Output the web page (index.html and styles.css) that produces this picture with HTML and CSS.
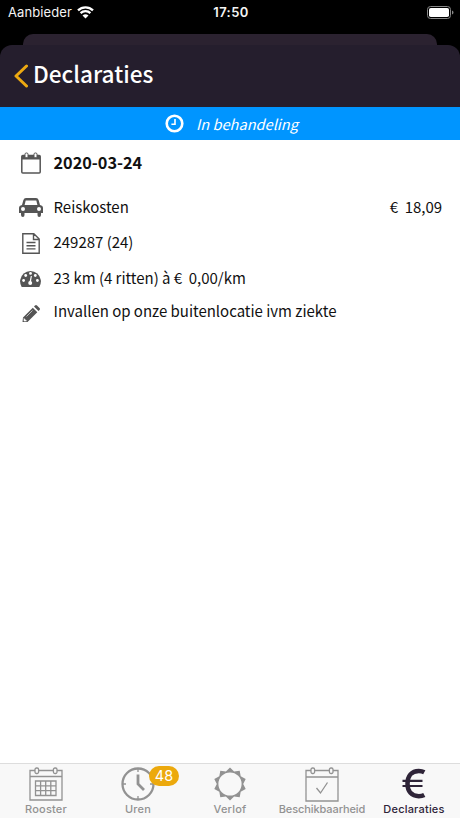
FILE: index.html
```html
<!DOCTYPE html>
<html lang="nl">
<head>
<meta charset="utf-8">
<title>Declaraties</title>
<link rel="stylesheet" href="styles.css">
</head>
<body>
<div class="screen">
  <div class="status-bar">
    <div class="carrier"><span>Aanbieder</span>
      <svg width="17" height="13" viewBox="0 0 17 13" fill="none" stroke="#fff"><path d="M1 4.4a10.8 10.8 0 0 1 15 0M3.6 7.1a7 7 0 0 1 9.8 0" stroke-width="2.300"/><path d="M5.500 9.600a4.400 4.400 0 0 1 6 0l-3 3z" fill="#fff" stroke="none"/></svg>
    </div>
    <div class="time">17:50</div>
    <svg class="battery" width="27" height="13" viewBox="0 0 27 13"><rect x=".5" y=".5" width="23" height="12" rx="3" fill="none" stroke="#888"/><rect x="2" y="2" width="20" height="9" rx="1.800" fill="#fff"/><path d="M25 4.500c2 .8 2 3.200 0 4z" fill="#888"/></svg>
  </div>
  <div class="back-card"></div>
  <header class="header">
    <svg class="back" width="14" height="24" viewBox="0 0 14 24" fill="none" stroke="#eda911" stroke-width="3" stroke-linecap="round" stroke-linejoin="round"><path d="M12.500 2 2 12l10.500 10"/></svg>
    <h1>Declaraties</h1>
  </header>
  <div class="state">
    <svg width="19" height="19" viewBox="0 0 19 19" fill="none" stroke="#fff"><circle cx="9.500" cy="9.500" r="7.800" stroke-width="2.600"/><path d="M10 5v5.200H6.400" stroke-width="1.600"/></svg>
    <em>In behandeling</em>
  </div>
  <main class="details">
    <div class="row row-date">
      <svg class="icon" width="20" height="22" viewBox="0 0 20 22" fill="none" stroke="#555"><rect x=".8" y="3.500" width="18.400" height="17.500" rx="1" stroke-width="1.500"/><path d="M1 3.500h18v4H1z" fill="#555" stroke="none"/><rect x="4" y="1" width="3" height="4.600" rx="1.200" fill="#fff"/><rect x="13" y="1" width="3" height="4.600" rx="1.200" fill="#fff"/></svg>
      <strong>2020-03-24</strong>
    </div>
    <div class="row row-cost">
      <svg class="icon" width="24" height="19" viewBox="0 0 24 19" fill="#555"><path fill-rule="evenodd" d="M7 0h10q2 0 2.600 2l1.400 5q3 .5 3 3v5h-2v2q0 2-1.800 2t-1.700-2v-2h-13v2q0 2-1.700 2T2 17v-2H0v-5q0-2.500 3-3l1.400-5Q5 0 7 0zM6.700 2.500 5.600 7h12.800l-1.100-4.500zM4 9a2 2 0 1 0 0 4 2 2 0 0 0 0-4zm16 0a2 2 0 1 0 0 4 2 2 0 0 0 0-4z"/></svg>
      <span>Reiskosten</span><span class="amount">€&nbsp; 18,09</span>
    </div>
    <div class="row row-doc">
      <svg class="icon" width="18" height="21" viewBox="0 0 18 21" fill="none" stroke="#555" stroke-width="1.400"><path d="M.8.8h11L17.200 6v14.200H.8zM11.500 1v5.500H17M4.500 9.500h9M4.500 12.700h9M4.500 15.900h9"/></svg>
      <span>249287 (24)</span>
    </div>
    <div class="row row-km">
      <svg class="icon" width="21" height="17" viewBox="0 0 21 17"><path d="M1.700 17a10.400 10.400 0 1 1 17.600 0z" fill="#555"/><g fill="#fff"><circle cx="3.600" cy="10.500" r="1.400"/><circle cx="5.700" cy="5.500" r="1.400"/><circle cx="10.500" cy="3.400" r="1.400"/><circle cx="15.300" cy="5.500" r="1.400"/><circle cx="17.400" cy="10.500" r="1.400"/><circle cx="10.200" cy="13" r="2"/><path d="m11.900 6-1 6H9.500l1.300-6z"/></g></svg>
      <span>23 km (4 ritten) à €&nbsp; 0,00/km</span>
    </div>
    <div class="row row-note">
      <svg class="icon" width="18" height="18" viewBox="0 0 18 18"><path d="m1 12.500 9.800-9.800 4.500 4.500L5.500 17H.5zM12 1.500l1-1q1-1 2 0L17.500 3q1 1 0 2l-1 1z" fill="#555"/><path d="m2 13.500 2.500 2.500H2zM4.500 11.500l6-6" fill="#fff" stroke="#fff" stroke-width=".6"/></svg>
      <span>Invallen op onze buitenlocatie ivm ziekte</span>
    </div>
  </main>
  <nav class="tabs">
    <div class="tab">
      <svg width="34" height="34" viewBox="0 0 34 34" fill="none" stroke="#929292" stroke-width="1.300"><path d="M6 3.500H1V33h32V3.500h-5M10 3.500h14M1 9.500h32M6.500 14h20.500v14.500H6.500zM11.600 14v14.500M16.700 14v14.500M21.800 14v14.500M6.500 18.800H27M6.500 23.600H27"/><rect x="6" y="1" width="3.600" height="5.500" rx="1.500"/><rect x="24.400" y="1" width="3.600" height="5.500" rx="1.500"/></svg>
      <span>Rooster</span>
    </div>
    <div class="tab">
      <div class="clock"><svg width="34" height="34" viewBox="0 0 34 34" fill="none" stroke="#929292"><circle cx="17" cy="17" r="15.500" stroke-width="2.300"/><path d="M17 7.500V17l6 6" stroke-width="2.800"/><path d="M17 1v4M17 29v4M1 17h4M29 17h4" stroke-width="1.300"/></svg><b class="badge">48</b></div>
      <span>Uren</span>
    </div>
    <div class="tab">
      <svg width="34" height="34" viewBox="0 0 34 34" fill="#929292"><path fill-rule="evenodd" d="M17 .5l4.100 3.950 5.600-.8 1 5.600 5 2.650-2.500 5.100 2.500 5.100-5 2.650-1 5.600-5.600-.8L17 33.500l-4.100-3.950-5.600.8-1-5.600-5-2.650L3.800 17l-2.500-5.100 5-2.650 1-5.600 5.600.8zM17 5.400a11.600 11.600 0 1 0 0 23.200 11.600 11.600 0 0 0 0-23.200z"/></svg>
      <span>Verlof</span>
    </div>
    <div class="tab availability">
      <svg width="34" height="35" viewBox="0 0 34 35" fill="none" stroke="#929292" stroke-width="1.300"><path d="M6 3.500H1V34h32V3.500h-5M10 3.500h14M1 10h32M11.500 21l4 5 7-10.500"/><rect x="6" y="1" width="3.600" height="5.500" rx="1.500"/><rect x="24.400" y="1" width="3.600" height="5.500" rx="1.500"/></svg>
      <span>Beschikbaarheid</span>
    </div>
    <div class="tab active">
      <svg width="24" height="33" viewBox="0 0 24 33" fill="none" stroke="#2e2438"><path d="M22.300 5.300C20.500 4.300 18.500 4 16.800 4 9.500 4 5.500 9 5.500 16.700s4 12.500 11.300 12.500c2 0 4-.4 5.500-1.200" stroke-width="4.500"/><path d="M.5 13.800h20M.5 19h20" stroke-width="2.200"/></svg>
      <span>Declaraties</span>
    </div>
  </nav>
</div>
</body>
</html>
```
FILE: styles.css
```css
* { box-sizing: border-box; }
body { margin: 0; background: #fff; }
.screen { width: 460px; height: 818px; display: flex; flex-direction: column; overflow: hidden; font-family: "Noto Sans CJK SC", sans-serif; color: #111;
  background: linear-gradient(#000 0 60px, #fff 60px); }
svg { display: block; flex: none; }
.status-bar { height: 34px; display: grid; grid-template-columns: 1fr auto 1fr; padding: 0 6px 11px 8px; align-items: center; color: #f4f4f4; font: 13px/23px Inter, sans-serif; }
.status-bar span, .time { padding-top: 1px; }
.carrier { display: flex; align-items: center; gap: 5px; letter-spacing: .1px; }
.time { font-weight: 600; letter-spacing: .4px; }
.battery { justify-self: end; }
.back-card { height: 11px; margin: 0 23px; border-radius: 10px 10px 0 0; background: #2b2230; }
.header { height: 62px; border-radius: 12px 12px 0 0; background: #251e2d; display: flex; align-items: center; gap: 5px; padding: 0 14px; color: #fff; }
h1 { margin: 0; padding-bottom: 5px; font-size: 22.6px; line-height: 30px; font-weight: 500; }
.state { height: 33px; background: #0095ff; color: #fff; display: flex; align-items: center; justify-content: center; gap: 12px; font-size: 14.6px; padding-left: 3px; }
.details { flex: 1; }
.row { display: grid; grid-template-columns: 53.5px 1fr auto; align-items: center; padding-right: 18px; font-size: 15px; line-height: 22px; letter-spacing: -.02px; }
.row > :not(.icon) { padding-bottom: 2px; }
.icon { justify-self: center; margin-left: 8px; }
.row-date { height: 46px; }
.row-date strong { font-size: 16.3px; }
.row-cost { height: 43px; }
.row-doc { height: 28px; }
.row-km { height: 43px; }
.row-note { height: 22px; }
.row-note .icon { margin-top: 4px; }
.tabs { height: 55px; border-top: 1px solid #ddd; background: #f8f8f8; display: grid; grid-template-columns: repeat(5, 92px); font: 500 11px/14px Inter, sans-serif; color: #929292; }
.tab { display: flex; flex-direction: column; justify-content: space-between; align-items: center; padding: 3px 0; letter-spacing: .2px; white-space: nowrap; }
.availability { letter-spacing: -.1px; }
.clock { position: relative; }
.badge { position: absolute; left: 28px; top: -1px; width: 30px; height: 20px; border-radius: 10px; background: #eca90d; color: #fff; font: 14.5px/20px Inter, sans-serif; text-align: center; }
.active { color: #2e2438; }
```
